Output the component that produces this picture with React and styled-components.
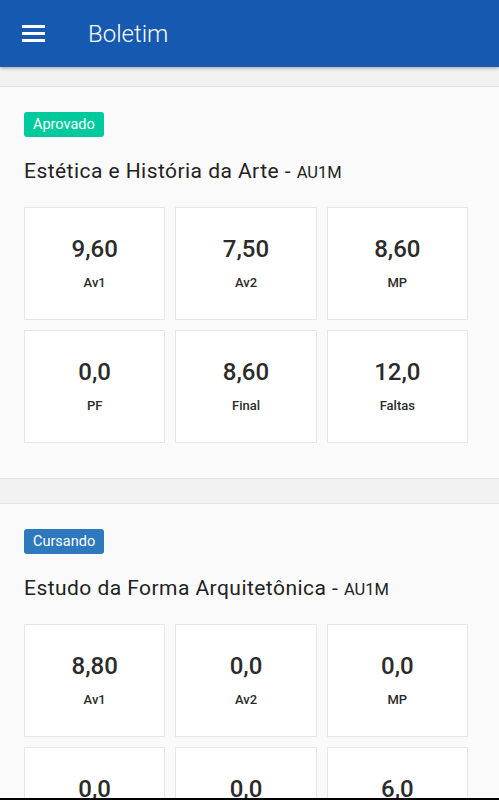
import styled, { createGlobalStyle } from "styled-components"

const Global = createGlobalStyle`
  html, body {
    margin: 0;
    padding: 0;
    background: #f2f2f2;
    font-family: Roboto, "Liberation Sans", sans-serif;
  }
`;

const Header = styled.header`
  height: 67px;
  background: #1559b0;
  display: flex;
  align-items: center;
  padding-left: 22px;
  gap: 43px;
  box-shadow: 0 1px 4px rgba(0, 0, 0, 0.35);
  position: relative;
  z-index: 1;
`;

const Menu = styled.button`
  width: 23px;
  height: 17px;
  padding: 0;
  border: 0;
  background: none;
  display: flex;
  flex-direction: column;
  justify-content: space-between;
  span {
    display: block;
    height: 3px;
    background: #fff;
  }
`;

const Title = styled.h1`
  margin: 0;
  color: #fff;
  font-size: 24px;
  font-weight: 300;
`;

const Main = styled.main`
  padding-top: 19px;
  display: flex;
  flex-direction: column;
  gap: 24px;
`;

const Section = styled.section`
  background: #fafafa;
  border-top: 1px solid #e3e3e3;
  border-bottom: 1px solid #e3e3e3;
  padding: 25px 31px 35px 24px;
`;

const Badge = styled.span`
  display: inline-block;
  height: 25px;
  line-height: 25px;
  padding: 0 9px;
  border-radius: 3px;
  color: #fff;
  font-size: 14.5px;
  background: ${p => p.$color};
`;

const Subject = styled.h2`
  margin: 21px 0 21px;
  font-size: 21px;
  letter-spacing: 0.45px;
  font-weight: 400;
  color: #222;
  line-height: 26px;
  small {
    font-size: 16.5px;
    letter-spacing: 0;
  }
`;

const Grid = styled.div`
  display: grid;
  grid-template-columns: repeat(3, 1fr);
  gap: 10px;
`;

const Card = styled.div`
  height: 113px;
  box-sizing: border-box;
  background: #fff;
  border: 1px solid #e6e6e6;
  display: flex;
  flex-direction: column;
  align-items: center;
  padding-top: 27px;
`;

const Value = styled.div`
  font-size: 24px;
  font-weight: 500;
  color: #2b2b2b;
  line-height: 28px;
`;

const Label = styled.div`
  margin-top: 12px;
  font-size: 13px;
  font-weight: 500;
  color: #2b2b2b;
`;

const BottomEdge = styled.div`
  position: fixed;
  left: 0;
  right: 0;
  bottom: 0;
  height: 2px;
  background: #000;
`;

const courses = [
  {
    status: "Aprovado",
    color: "#00c99b",
    name: "Estética e História da Arte",
    code: "AU1M",
    grades: [["9,60", "Av1"], ["7,50", "Av2"], ["8,60", "MP"], ["0,0", "PF"], ["8,60", "Final"], ["12,0", "Faltas"]],
  },
  {
    status: "Cursando",
    color: "#2e78bd",
    name: "Estudo da Forma Arquitetônica",
    code: "AU1M",
    grades: [["8,80", "Av1"], ["0,0", "Av2"], ["0,0", "MP"], ["0,0", "PF"], ["0,0", "Final"], ["6,0", "Faltas"]],
  },
];

export default function App() {
  return (
    <>
      <Global />
      <Header>
        <Menu aria-label="menu"><span /><span /><span /></Menu>
        <Title>Boletim</Title>
      </Header>
      <Main>
        {courses.map(c => (
          <Section key={c.name}>
            <Badge $color={c.color}>{c.status}</Badge>
            <Subject>{c.name} - <small>{c.code}</small></Subject>
            <Grid>
              {c.grades.map(([v, l]) => (
                <Card key={l}>
                  <Value>{v}</Value>
                  <Label>{l}</Label>
                </Card>
              ))}
            </Grid>
          </Section>
        ))}
      </Main>
      <BottomEdge />
    </>
  );
}
